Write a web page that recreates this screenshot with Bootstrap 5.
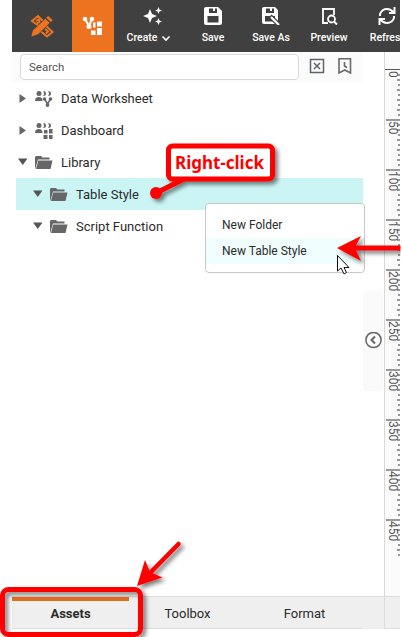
<!DOCTYPE html>
<html lang="en">
<head>
<meta charset="utf-8">
<title>Assets</title>
<link href="https://cdn.jsdelivr.net/npm/bootstrap@5.3.0/dist/css/bootstrap.min.css" rel="stylesheet">
<style>
body{font-family:Roboto,"Liberation Sans",sans-serif;font-size:13px;color:#2b2b2b;background:#fff;overflow:hidden;letter-spacing:0}
svg{display:block;flex:none}
.app{width:388px;height:629px;margin-left:12px}
.topbar{height:52px;background:#404040;color:#fff;font-size:10.5px;font-weight:500;letter-spacing:0}
.logo{width:60px;color:#ee7320}
.portal{width:42px;background:#ee7320}
.tool{padding-top:7px;line-height:12px}
.tool svg{height:18px;margin-bottom:7px}
.pane{width:351px}
.searchrow{height:30px;background:#fbfbfb;padding:2px 0 0 8px}
.searchrow .form-control{width:279px;height:26px;font-size:11.5px;border-color:#dadada;padding:0 8px;background:#fff;border-radius:4px;letter-spacing:0}
.searchrow .form-control::placeholder{color:#555}
.node{height:32px;margin-left:4px;padding-left:3px;padding-top:1px}
.node.sub{padding-left:17px}
.node.sel{background:#cbf5f5}
.node .caret{width:8px;margin-right:7px}
.node .pic{width:20px;margin-right:7px}
.gutter{width:21px;padding-top:239px}
.handle{width:20px;height:100px;background:#fafafa;border-radius:4px}
.ruler{width:16px;background:#fbfbfb;border-left:1px solid #d8d8d8}
.tabs{height:33px;font-size:13px}
.tabs .strip{width:351px;background:#efefef;border-top:1px solid #ddd;border-bottom:1px solid #ddd}
.tabs .tab{width:117px;border-top:4px solid transparent;padding-bottom:1px}
.tabs .tab.on{border-color:#e56e1d;font-weight:700}
.tabs .mid{width:21px;background:#efefef;border-top:1px solid #ddd}
.tabs .end{width:16px;background:#efefef;border:1px solid #ddd;border-right:0}
.menu{left:205px;top:203px;width:160px;height:70px;background:#fff;border:1px solid #c8c8c8;border-radius:4px;padding-top:8px;font-size:12px;letter-spacing:0}
.menu div{height:26px;padding-left:16px}
.menu .hot{background:#effdfd}
.notes{left:0;top:0;pointer-events:none}
</style>
</head>
<body>
<div class="app d-flex flex-column overflow-hidden">
  <header class="topbar d-flex overflow-hidden flex-shrink-0">
    <div class="logo d-flex align-items-center justify-content-center flex-shrink-0">
      <svg width="24" height="24" viewBox="0 0 24 24" fill="none" stroke="currentColor"><path d="M9 12L2 7L8 2L13 7M6 7L9 5M9 5L9.500 8L7 9" stroke-width="2"/><path d="M16 12L22.500 18L17 22.500L11 17.500M15 15L18 17.500L16 19.500" stroke-width="2"/><path d="M18 1.500L23 6L21 8.500L16 4ZM15.500 4.500L20 9L8 20.500L1 23L2.500 16.500Z" fill="currentColor" stroke="#404040" stroke-width=".6"/></svg>
    </div>
    <div class="portal d-flex align-items-center justify-content-center flex-shrink-0">
      <svg width="22" height="20" viewBox="0 0 22 20" fill="#fff"><circle cx="3" cy="3" r="2.300"/><circle cx="10" cy="3" r="2.300"/><circle cx="7" cy="10.500" r="2.500"/><path d="M3 3L7 10L10 3" fill="none" stroke="#fff" stroke-width="2"/><path d="M15 5.500h5v5h-5zM11 6.500h2.500v5h-2.500zM15 12h5v7h-5zM9 14.500h4.500V19H9z"/></svg>
    </div>
    <div class="tool d-flex flex-column align-items-center flex-shrink-0" style="width:70px">
      <svg class="ms-2" width="20" viewBox="0 0 20 18" fill="#fff"><path d="M7 2L9 7L14 9L9 11L7 16L5 11L0 9L5 7ZM15.500 0L16.500 2.500L19 3.500L16.500 4.500L15.500 7L14.500 4.500L12 3.500L14.500 2.500ZM15.500 11L16.500 13.500L19 14.500L16.500 15.500L15.500 18L14.500 15.500L12 14.500L14.500 13.500Z"/></svg>
      <div class="d-flex align-items-center"><span>Create</span><svg class="mb-0 ms-1" width="10" style="height:7px" viewBox="0 0 10 7"><path d="M1.500 1.500L5 5L8.500 1.500" fill="none" stroke="#fff" stroke-width="1.600"/></svg></div>
    </div>
    <div class="tool d-flex flex-column align-items-center flex-shrink-0" style="width:58px">
      <svg width="18" viewBox="0 0 18 18"><path fill="#fff" fill-rule="evenodd" d="M2 0H14L18 4V16Q18 18 16 18H2Q0 18 0 16V2Q0 0 2 0ZM5 1.500V6H13V1.500H11V4H9V1.500ZM3.500 9V15.500H14.500V9Z"/></svg>Save
    </div>
    <div class="tool d-flex flex-column align-items-center flex-shrink-0" style="width:58px">
      <svg width="18" viewBox="0 0 18 18"><path fill="#fff" fill-rule="evenodd" d="M2 0H13L16 3V17H2Q0 17 0 15V2Q0 0 2 0ZM4 1.500V6H12V1.500H10V4H8V1.500ZM3 9V14.500H13V9Z"/><path d="M8 9L17 18" stroke="#404040" stroke-width="4.500"/><path d="M9 10L17 18" stroke="#fff" stroke-width="2.200"/></svg>Save As
    </div>
    <div class="tool d-flex flex-column align-items-center flex-shrink-0" style="width:58px">
      <svg width="17" viewBox="0 0 17 18" fill="none" stroke="#fff" stroke-width="1.800"><path d="M7 16H2V2H13V8"/><circle cx="10.500" cy="12" r="3.500"/><path d="M13 14.500L16 17.500" stroke-width="2"/></svg>Preview
    </div>
    <div class="tool d-flex flex-column align-items-center flex-shrink-0" style="width:60px">
      <svg style="margin-right:2px" width="18" viewBox="0 0 18 18" fill="none" stroke="#fff" stroke-width="2"><path d="M2 9V7Q4 2 9 2Q13 2 15.500 5.500M16.500 0V6H11M16 9V11Q14 16 9 16Q5 16 2.500 12.500M1.500 18V12H7"/></svg>Refresh
    </div>
  </header>
  <main class="d-flex flex-grow-1 overflow-hidden">
    <section class="pane flex-shrink-0">
      <div class="searchrow d-flex">
        <input class="form-control" placeholder="Search">
        <svg style="margin:4px 0 0 10px" width="16" height="16" viewBox="0 0 16 16" fill="none" stroke="#5f6368" stroke-width="1.500"><path d="M1.500 1.500h13v13h-13zM5 5l6 6M11 5l-6 6"/></svg>
        <svg style="margin:3px 0 0 12px" width="16" height="18" viewBox="0 0 16 18" fill="none" stroke="#696969" stroke-width="1.600"><path d="M2 1.800H13.500V16L7.750 13L2 16ZM7.500 5V9L10 10.500"/></svg>
      </div>
      <div class="node d-flex align-items-center"><svg class="caret" height="10" viewBox="0 0 8 10"><path d="M0.500 0L7 4.500L0.500 9Z" fill="#666"/></svg>
        <svg class="pic" height="18" viewBox="0 0 20 18" fill="#666"><circle cx="5" cy="3.500" r="2.500"/><path d="M1 11Q1 7 5 7Q8.500 7 8.500 11ZM9 1q3 0 3 2.500T9 6q2-2.500 0-5zM14 1q3 0 3 2.500T14 6q2-2.500 0-5z"/><circle cx="10.500" cy="9" r="1.800"/><circle cx="16.500" cy="9" r="1.800"/><circle cx="13.500" cy="15" r="1.900"/><path d="M10.500 9L13.500 14L16.500 9" stroke="#666" stroke-width="1.500" fill="none"/></svg>Data Worksheet</div>
      <div class="node d-flex align-items-center"><svg class="caret" height="10" viewBox="0 0 8 10"><path d="M0.500 0L7 4.500L0.500 9Z" fill="#666"/></svg>
        <svg class="pic" height="18" viewBox="0 0 20 18" fill="#666"><circle cx="5" cy="3.500" r="2.500"/><path d="M1 11Q1 7 5 7Q8.500 7 8.500 11ZM9 1q3 0 3 2.500T9 6q2-2.500 0-5zM14 1q3 0 3 2.500T14 6q2-2.500 0-5zM10 8h3.500v3.500H10zM15 7h3.500v4.500H15zM9.500 13h4v4h-4zM15 13h3.500v4H15z"/></svg>Dashboard</div>
      <div class="node d-flex align-items-center"><svg class="caret" width="10" height="10" viewBox="0 0 10 10" style="width:10px;margin-left:-1px;margin-right:6px"><path d="M0 0.500H9.500L4.750 7Z" fill="#555"/></svg>
        <svg class="pic" height="16" viewBox="0 0 20 16"><path d="M1 14V2L2 1H7L8.500 2.500H15.500V4.500H4L1.500 13Z" fill="#666"/><path d="M4.200 5.500H18.500L16.500 14H2Z" fill="#666"/></svg>Library</div>
      <div class="node sub sel d-flex align-items-center"><svg class="caret" viewBox="0 0 10 10" height="10" style="width:10px;margin-right:6px"><path d="M0 0.500H9.500L4.750 7Z" fill="#555"/></svg>
        <svg class="pic" height="16" viewBox="0 0 20 16"><path d="M1 14V2L2 1H7L8.500 2.500H15.500V4.500H4L1.500 13Z" fill="#666"/><path d="M4.200 5.500H18.500L16.500 14H2Z" fill="#666"/></svg>Table Style</div>
      <div class="node sub d-flex align-items-center"><svg class="caret" viewBox="0 0 10 10" height="10" style="width:10px;margin-right:6px"><path d="M0 0.500H9.500L4.750 7Z" fill="#555"/></svg>
        <svg class="pic" height="16" viewBox="0 0 20 16"><path d="M1 14V2L2 1H7L8.500 2.500H15.500V4.500H4L1.500 13Z" fill="#666"/><path d="M4.200 5.500H18.500L16.500 14H2Z" fill="#666"/></svg>Script Function</div>
    </section>
    <div class="gutter flex-shrink-0"><div class="handle d-flex align-items-center justify-content-center">
      <svg width="18" height="18" viewBox="0 0 18 18" fill="none" stroke="#666" stroke-width="1.500"><circle cx="9.500" cy="8" r="7.600"/><path d="M11 4.500L7.500 8L11 11.500" stroke-width="2"/></svg></div></div>
    <div class="ruler flex-shrink-0"><svg id="ruler" width="15" height="544" font-size="12" fill="#555"></svg></div>
  </main>
  <nav class="tabs d-flex flex-shrink-0">
    <div class="strip d-flex flex-shrink-0">
      <div class="tab on d-flex align-items-center justify-content-center">Assets</div>
      <div class="tab d-flex align-items-center justify-content-center">Toolbox</div>
      <div class="tab d-flex align-items-center justify-content-center">Format</div>
    </div>
    <div class="mid"></div><div class="end"></div>
  </nav>
</div>
<div class="menu position-absolute">
  <div class="d-flex align-items-center">New Folder</div>
  <div class="hot d-flex align-items-center">New Table Style</div>
</div>
<svg class="notes position-absolute" width="402" height="637" viewBox="0 0 402 637">
  <defs><filter id="sh" x="-30%" y="-50%" width="160%" height="200%"><feDropShadow dx="3" dy="3" stdDeviation="2" flood-opacity=".5"/></filter>
  <clipPath id="edge"><path d="M0 0H400.500V637H0Z"/></clipPath></defs>
  <g filter="url(#sh)"><path d="M156 193L186 178" stroke="red" stroke-width="5"/><circle cx="156" cy="193" r="6" fill="red"/><rect x="168.500" y="146" width="104" height="33" rx="4" fill="#fff" stroke="red" stroke-width="5"/></g>
  <text x="175" y="169" fill="red" font-family="Noto Sans,sans-serif" font-weight="700" font-size="17.500" textLength="89" lengthAdjust="spacingAndGlyphs">Right-click</text>
  <g clip-path="url(#edge)"><g filter="url(#sh)"><path d="M337 248L361 236L356 245.500H401V250.500H356L361 261Z" fill="red"/></g></g>
  <path d="M337.500 255.500V271L341 268L344 274L346.500 272.500L344 267.500H349Z" fill="#fff" stroke="#111"/>
  <g filter="url(#sh)"><path d="M178.500 544L150 573" stroke="red" stroke-width="4.500" stroke-linecap="round"/><path d="M137 586L145 560L150 572L162.500 577.500Z" fill="red"/></g>
  <g filter="url(#sh)"><rect x="2.500" y="589.500" width="138" height="45" rx="6" fill="none" stroke="red" stroke-width="5"/></g>
</svg>
<script>
// ruler: labelled mark every 50 units, small mark every 5
const r=document.getElementById('ruler');let s='<path d="M0 17.500H15" stroke="#555"/>';
for(let v=5;v<=485;v+=5){const y=18+v;s+=v%50===0?`<rect x="1" y="${y-1}" width="14" height="2" fill="#999"/>`:`<rect x="${v%10?13:12}" y="${y-1}" width="3" height="2" fill="#999"/>`}
for(let v=0;v<=450;v+=50)s+=`<text transform="translate(4 ${19+v}) rotate(90)">${v}</text>`;
r.innerHTML=s;
</script>
<script src="https://cdn.jsdelivr.net/npm/bootstrap@5.3.0/dist/js/bootstrap.bundle.min.js"></script>
</body>
</html>
